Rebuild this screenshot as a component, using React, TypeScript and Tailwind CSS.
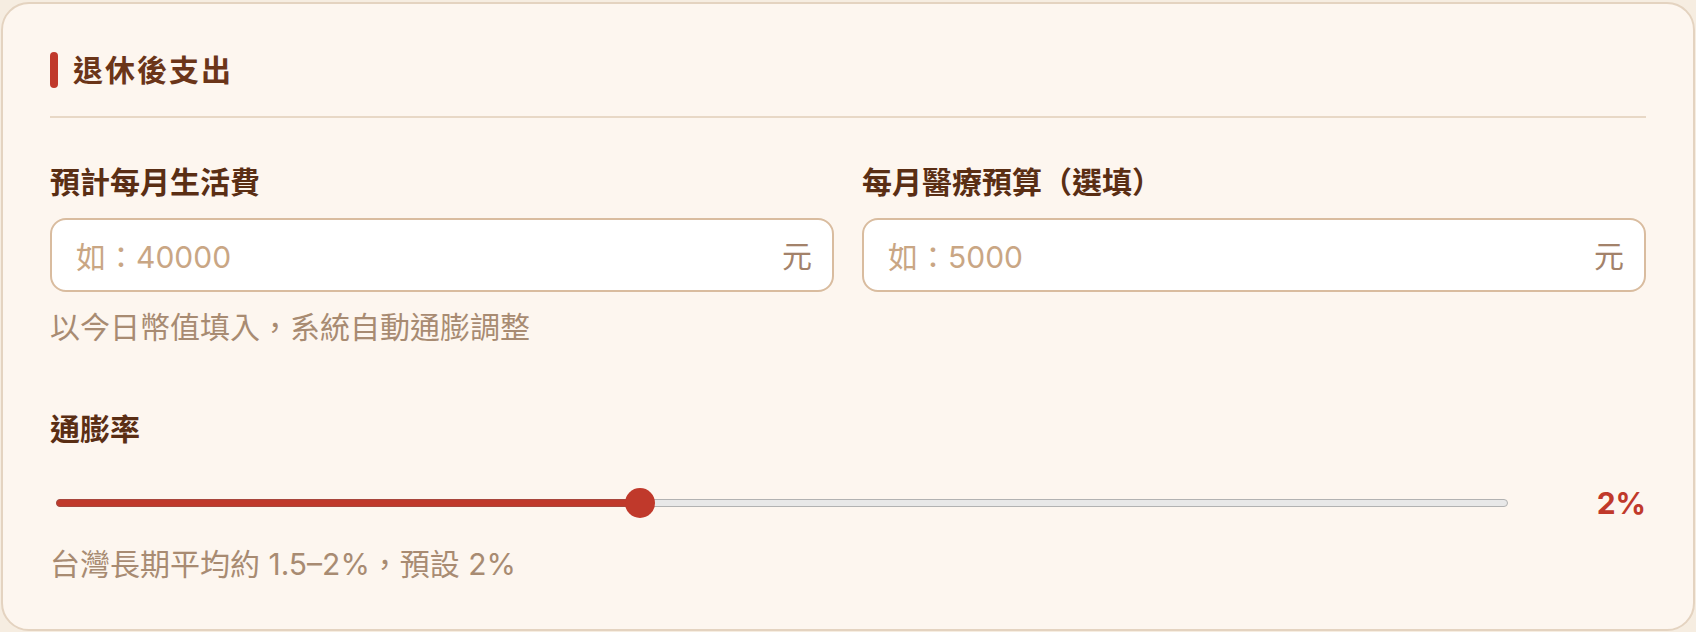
import React from 'react';

// 退休後支出 — 表單卡片
const fontStack = "font-['Inter','Noto_Sans_CJK_TC',sans-serif]";

const MoneyInput = ({ placeholder }: { placeholder: string }) => (
  <div className="flex h-[74px] items-center justify-between rounded-[16px] border-2 border-[#d9bc9f] bg-white pl-[24px] pr-[20px]">
    <input
      placeholder={placeholder}
      className="w-full bg-transparent pt-[4px] text-[30px] text-[#5a2e14] outline-none placeholder:text-[#c9a684]"
    />
    <span className="shrink-0 pt-[2px] text-[30px] text-[#a3826a]">元</span>
  </div>
);

export default function App() {
  const rate = 2;
  const min = 0;
  const max = 5;
  const ratio = (rate - min) / (max - min);
  // 和原生 range 一樣：拇指中心在 [r, 寬 - r] 之間移動
  const thumbPos = `calc(15px + ${ratio} * (100% - 30px))`;

  return (
    <div className={`h-[632px] w-full bg-[#f6ede1] px-px pb-px pt-[2px] ${fontStack}`}>
      <div className="h-full rounded-[28px] border-2 border-[#e4d3c0] bg-[#fdf6ef] px-[47px] pt-[48px]">
        {/* 標題 */}
        <div className="flex items-center gap-[15px] border-b-2 border-[#e8d8c6] pb-[28px]">
          <div className="h-[36px] w-[8px] rounded-full bg-[#c0392b]" />
          <h2 className="text-[30px] font-bold leading-[36px] tracking-[2px] text-[#6b3519]">退休後支出</h2>
        </div>

        {/* 生活費 / 醫療預算 */}
        <div className="mt-[46px] grid grid-cols-2 gap-[28px]">
          <div>
            <p className="mb-[18px] text-[30px] font-bold leading-[36px] text-[#5a2e14]">預計每月生活費</p>
            <MoneyInput placeholder="如：40000" />
            <p className="mt-[17px] text-[30px] leading-[36px] text-[#a88b72]">以今日幣值填入，系統自動通膨調整</p>
          </div>
          <div>
            <p className="mb-[18px] text-[30px] font-bold leading-[36px] text-[#5a2e14]">每月醫療預算（選填）</p>
            <MoneyInput placeholder="如：5000" />
          </div>
        </div>

        {/* 通膨率 */}
        <div className="mt-[66px]">
          <p className="text-[30px] font-bold leading-[36px] text-[#5a2e14]">通膨率</p>
          <div className="mt-[38px] flex items-center">
            <div className="relative flex h-[30px] flex-1 items-center pl-[6px] pr-[5px]">
              <div className="relative h-[8px] w-full rounded-full border border-[#b2b2b2] bg-[#e8e8e8]">
                <div
                  className="absolute -left-px -top-px h-[8px] rounded-full border border-[#a8463c] bg-[#c0392b]"
                  style={{ width: thumbPos }}
                />
                <div
                  className="absolute top-1/2 h-[30px] w-[30px] -translate-x-1/2 -translate-y-1/2 rounded-full bg-[#c0392b]"
                  style={{ left: thumbPos }}
                />
              </div>
            </div>
            <span className="w-[133px] text-right text-[30px] font-bold leading-[36px] text-[#c0392b]">{rate}%</span>
          </div>
          <p className="mt-[25px] text-[30px] leading-[36px] text-[#a88b72]">台灣長期平均約 1.5–2%，預設 2%</p>
        </div>
      </div>
    </div>
  );
}
